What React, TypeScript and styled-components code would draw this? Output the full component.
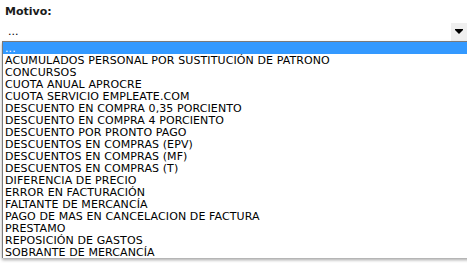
import React from "react";
import styled, { createGlobalStyle } from "styled-components";

const GlobalStyle = createGlobalStyle`
  html, body {
    margin: 0;
    padding: 0;
    background: #ffffff;
    overflow: hidden;
  }
  body {
    font-family: Verdana, "DejaVu Sans", sans-serif;
    font-size: 11px;
    color: #000000;
  }
`;

const Page = styled.div`
  width: 467px;
  height: 263px;
  display: flex;
  flex-direction: column;
  padding-top: 6px;
  box-sizing: border-box;
  overflow: hidden;
`;

const Label = styled.label`
  display: block;
  padding-left: 5px;
  font-weight: bold;
  font-size: 11px;
  line-height: 12px;
  color: #1a1a1a;
  height: 16px;
`;

const SelectBox = styled.div`
  display: flex;
  align-items: center;
  height: 19px;
  margin-left: 2px;
`;

const SelectValue = styled.span`
  flex: 1;
  padding-left: 6px;
  font-size: 11px;
  line-height: 18px;
  color: #000000;
`;

const ArrowButton = styled.span`
  width: 16px;
  height: 18px;
  background: #efefef;
  display: flex;
  align-items: center;
  justify-content: center;
`;

const OptionList = styled.ul`
  list-style: none;
  margin: 0 0 0 2px;
  padding: 0;
  width: 470px;
  border-top: 1px solid #7a7a7a;
  border-left: 1px solid #7a7a7a;
  box-shadow: 0 2px 3px rgba(0, 0, 0, 0.35);
  background: #ffffff;
`;

const Option = styled.li<{ $selected?: boolean }>`
  height: 11px;
  padding-top: 1px;
  line-height: 12px;
  padding-left: 2px;
  font-size: 11px;
  letter-spacing: 0.1px;
  white-space: nowrap;
  background: ${({ $selected }) => ($selected ? "#3399ff" : "transparent")};
  color: ${({ $selected }) => ($selected ? "#ffffff" : "#000000")};
`;

const options = [
  "...",
  "ACUMULADOS PERSONAL POR SUSTITUCIÓN DE PATRONO",
  "CONCURSOS",
  "CUOTA ANUAL APROCRE",
  "CUOTA SERVICIO EMPLEATE.COM",
  "DESCUENTO EN COMPRA 0,35 PORCIENTO",
  "DESCUENTO EN COMPRA 4 PORCIENTO",
  "DESCUENTO POR PRONTO PAGO",
  "DESCUENTOS EN COMPRAS (EPV)",
  "DESCUENTOS EN COMPRAS (MF)",
  "DESCUENTOS EN COMPRAS (T)",
  "DIFERENCIA DE PRECIO",
  "ERROR EN FACTURACIÓN",
  "FALTANTE DE MERCANCÍA",
  "PAGO DE MAS EN CANCELACION DE FACTURA",
  "PRESTAMO",
  "REPOSICIÓN DE GASTOS",
  "SOBRANTE DE MERCANCÍA",
];

const App: React.FC = () => {
  return (
    <Page>
      <GlobalStyle />
      <Label>Motivo:</Label>
      <SelectBox>
        <SelectValue>...</SelectValue>
        <ArrowButton>
          <svg width="8" height="5" viewBox="0 0 8 5">
            <path d="M0 0h8v1L4 5 0 1z" fill="#000" />
          </svg>
        </ArrowButton>
      </SelectBox>
      <OptionList>
        {options.map((opt, index) => (
          <Option key={index} $selected={index === 0}>
            {opt}
          </Option>
        ))}
      </OptionList>
    </Page>
  );
};

export default App;
